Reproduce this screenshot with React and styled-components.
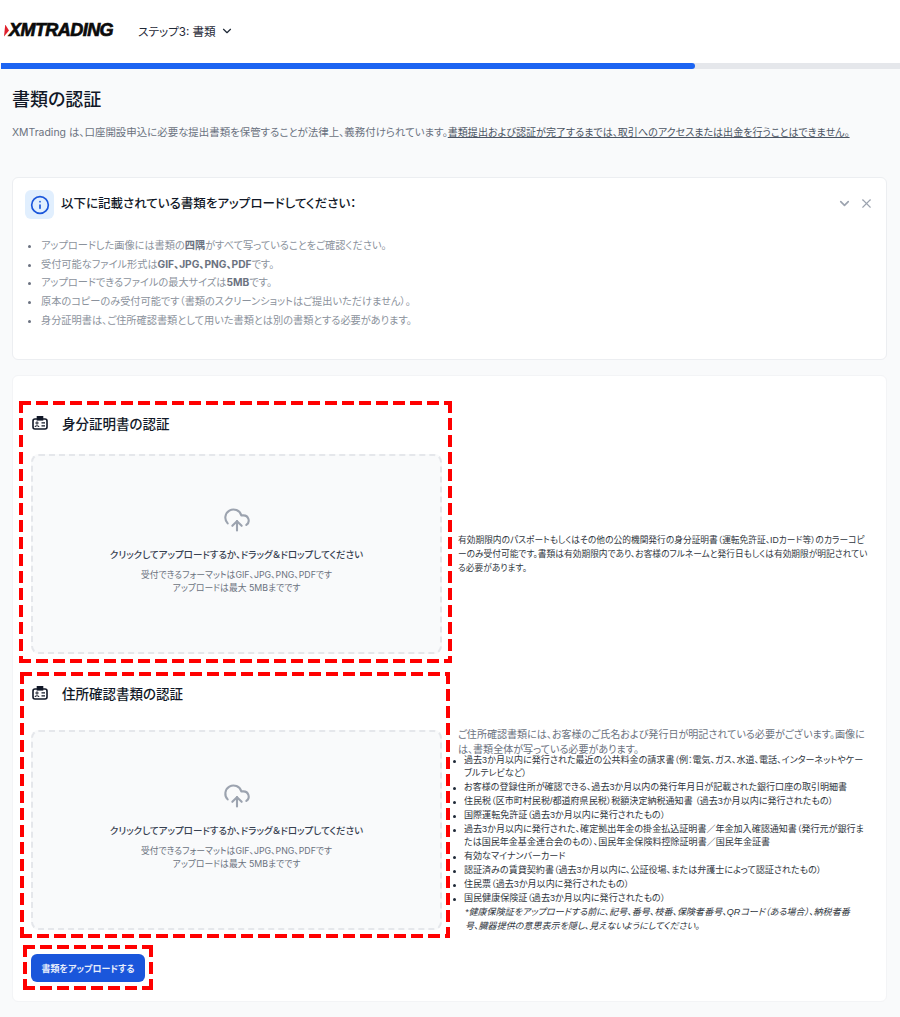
import React from 'react'
import styled, { createGlobalStyle } from 'styled-components'
import { ChevronDown, CloudUpload, Info, X } from 'lucide-react'

const Global = createGlobalStyle`
  html, body { margin: 0; padding: 0; }
  body {
    background: #f9fafb;
    color: #111827;
    font-family: Inter, "Noto Sans CJK JP", sans-serif;
    font-feature-settings: "palt";
  }
  * { box-sizing: border-box; }
`

const Page = styled.div`
  width: 900px;
  height: 1017px;
  overflow: hidden;
`

const Header = styled.header`
  height: 63px;
  background: #fff;
  display: flex;
  align-items: center;
  padding: 0 0 2px 4px;
`

const Logo = styled.div`
  width: 134px;
  display: flex;
  align-items: center;
`

const LogoMark = styled.span`
  width: 5px;
  height: 12px;
  background: #e0202c;
  clip-path: polygon(25% 0, 100% 50%, 0 100%);
`

const LogoText = styled.span`
  font-family: "Liberation Sans", sans-serif;
  font-size: 18px;
  font-weight: 700;
  font-style: italic;
  letter-spacing: -0.55px;
  color: #0b0b0b;
  -webkit-text-stroke: 0.7px #0b0b0b;
`

const Step = styled.div`
  display: flex;
  align-items: center;
  gap: 4px;
  font-size: 11.6px;
  color: #1f2937;
`

const Track = styled.div`
  height: 6px;
  margin-left: 1px;
  background: #e5e7eb;
`

const Fill = styled.div`
  height: 100%;
  background: #1c64f2;
  border-radius: 0 3px 3px 0;
`

const Main = styled.main`
  padding: 19px 13px 0 12px;
`

const Title = styled.h1`
  margin: 0;
  font-size: 18px;
  line-height: 24px;
  font-weight: 500;
  color: #111827;
`

const Lead = styled.p`
  margin: 11px 0 0;
  font-size: 10.45px;
  line-height: 18px;
  color: #6b7280;
  white-space: nowrap;
  a { color: #4b5563; font-size: 10.05px; text-decoration: underline; }
`

const Card = styled.section`
  background: #fff;
  border: 1px solid #eceef1;
  border-radius: 6px;
`

const InfoCard = styled(Card)`
  margin-top: 35px;
  height: 183px;
  padding: 12px 12px 0;
`

const InfoHead = styled.div`
  display: flex;
  align-items: center;
  gap: 7px;
`

const InfoBadge = styled.span`
  width: 29px;
  height: 29px;
  border-radius: 6px;
  background: #e1effe;
  color: #1a56db;
  display: flex;
  align-items: center;
  justify-content: center;
`

const InfoTitle = styled.h2`
  flex: 1;
  margin: -2px 0 0;
  font-size: 12.5px;
  line-height: 20px;
  font-weight: 500;
  color: #111827;
`

const InfoActions = styled.div`
  display: flex;
  gap: 7px;
  color: #9ca3af;
  margin: -3px 0 0 0;
`

const Notes = styled.ul`
  margin: 17px 0 0;
  padding: 0 0 0 16px;
  font-size: 10.2px;
  line-height: 18.7px;
  color: #8b929c;
  li::marker { color: #6b7280; }
  b { font-weight: 700; color: #6b7280; }
`

const UploadCard = styled(Card)`
  margin-top: 15px;
  height: 627px;
  padding: 27px 18px 0;
  border-color: #f3f4f6;
`

const Row = styled.div`
  position: relative;
  display: grid;
  grid-template-columns: 411px 1fr;
  column-gap: 16px;
  margin-bottom: ${p => p.$after}px;
`

const RowHead = styled.div`
  grid-column: 1 / 3;
  display: flex;
  align-items: center;
  gap: 14px;
  height: 42px;
  margin-left: 1px;
  margin-bottom: ${p => p.$gap}px;
`

const RowTitle = styled.h3`
  margin: 0;
  font-size: 13.5px;
  line-height: 20px;
  font-weight: 500;
  color: #111827;
`

const Drop = styled.div`
  height: 200px;
  background: #f9fafb;
  border: 2px dashed #e5e7eb;
  border-radius: 8px;
  display: flex;
  flex-direction: column;
  align-items: center;
  padding-top: 50px;
  color: #9ca3af;
`

const DropTitle = styled.p`
  margin: 13px 0 0;
  font-size: 9.5px;
  line-height: 16px;
  font-weight: 500;
  color: #374151;
`

const DropSub = styled.p`
  margin: 5px 0 0;
  font-size: 8.8px;
  line-height: 13px;
  text-align: center;
  color: #6b7280;
`

const Side = styled.div`
  align-self: center;
  font-family: "Liberation Sans", "Noto Sans CJK JP", sans-serif;
  font-size: 8.72px;
  line-height: 14px;
  color: #2f3640;
`

const SideLong = styled(Side)`
  margin: -4px 0;
  font-size: 9.05px;
`

const SideIntro = styled.p`
  margin: 0 0 -3px;
  font-size: 10.05px;
  line-height: 15px;
  color: #6b7280;
`

const SideList = styled.ul`
  margin: 0;
  padding: 0 4px 0 6px;
  list-style: none;
  li { position: relative; margin-bottom: 0; line-height: 13.8px; }
  li::before {
    content: "";
    position: absolute;
    left: -11px;
    top: 6px;
    width: 3px;
    height: 3px;
    border-radius: 50%;
    background: #1f2937;
  }
`

const SideNote = styled.p`
  margin: 0 8px 0 7px;
  font-size: 9.05px;
  line-height: 14px;
  font-style: italic;
`

const Submit = styled.button`
  display: block;
  height: 28px;
  width: 114px;
  margin: 0;
  padding: 0;
  border: 0;
  border-radius: 6px;
  background: #1a56db;
  color: #e8eefc;
  font-family: inherit;
  font-feature-settings: inherit;
  font-size: 9px;
  font-weight: 700;
`

// red review markup lying over the form
const Mark = styled.div`
  position: absolute;
  top: ${p => p.$top}px;
  left: ${p => p.$left}px;
  width: ${p => p.$w}px;
  height: ${p => p.$h}px;
  pointer-events: none;
  background:
    repeating-linear-gradient(90deg, #f00 0 12px, transparent 12px 17px) top / 100% 4px no-repeat,
    repeating-linear-gradient(90deg, #f00 0 12px, transparent 12px 17px) bottom / 100% 4px no-repeat,
    repeating-linear-gradient(180deg, #f00 0 12px, transparent 12px 17px) left / 4px 100% no-repeat,
    repeating-linear-gradient(180deg, #f00 0 12px, transparent 12px 17px) right / 4px 100% no-repeat;
`

const SubmitWrap = styled.div`
  position: relative;
`

const IdIcon = () => (
  <svg width="16" height="14" viewBox="0 0 16 14" fill="none" stroke="#111827" strokeWidth="1.6" style={{ marginTop: -2 }}>
    <rect x="1" y="3" width="14" height="10" rx="2" />
    <rect x="5.5" y="0.8" width="5" height="3" fill="#111827" />
    <circle cx="5" cy="7" r="1.1" strokeWidth="1" />
    <path d="M3 11c.3-1.6 3.7-1.6 4 0" strokeWidth="1.1" />
    <path d="M9.5 6.8h3.5M9.5 9.8h3.5" strokeWidth="1.2" />
  </svg>
)

const DropZone = () => (
  <Drop>
    <CloudUpload size={28} strokeWidth={1.8} />
    <DropTitle>クリックしてアップロードするか、ドラッグ＆ドロップしてください</DropTitle>
    <DropSub>
      受付できるフォーマットはGIF、JPG、PNG、PDFです
      <br />
      アップロードは最大 5MBまでです
    </DropSub>
  </Drop>
)

const notes = [
  <>アップロードした画像には書類の<b>四隅</b>がすべて写っていることをご確認ください。</>,
  <>受付可能なファイル形式は<b>GIF、JPG、PNG、PDF</b>です。</>,
  <>アップロードできるファイルの最大サイズは<b>5MB</b>です。</>,
  <>原本のコピーのみ受付可能です（書類のスクリーンショットはご提出いただけません）。</>,
  <>身分証明書は、ご住所確認書類として用いた書類とは別の書類とする必要があります。</>,
]

const addressDocs = [
  '過去3か月以内に発行された最近の公共料金の請求書（例：電気、ガス、水道、電話、インターネットやケーブルテレビなど）',
  'お客様の登録住所が確認できる、過去3か月以内の発行年月日が記載された銀行口座の取引明細書',
  '住民税（区市町村民税/都道府県民税）税額決定納税通知書 （過去3か月以内に発行されたもの）',
  '国際運転免許証（過去3か月以内に発行されたもの）',
  '過去3か月以内に発行された、確定拠出年金の掛金払込証明書／年金加入確認通知書（発行元が銀行または国民年金基金連合会のもの）、国民年金保険料控除証明書／国民年金証書',
  '有効なマイナンバーカード',
  '認証済みの賃貸契約書（過去3か月以内に、公証役場、または弁護士によって認証されたもの）',
  '住民票（過去3か月以内に発行されたもの）',
  '国民健康保険証（過去3か月以内に発行されたもの）',
]

export default function App() {
  return (
    <Page>
      <Global />
      <Header>
        <Logo>
          <LogoMark />
          <LogoText>XMTRADING</LogoText>
        </Logo>
        <Step>
          ステップ3: 書類
          <ChevronDown size={14} strokeWidth={2} />
        </Step>
      </Header>
      <Track>
        <Fill style={{ width: '77.2%' }} />
      </Track>
      <Main>
        <Title>書類の認証</Title>
        <Lead>
          XMTrading は、口座開設申込に必要な提出書類を保管することが法律上、義務付けられています。
          <a href="#docs">書類提出および認証が完了するまでは、取引へのアクセスまたは出金を行うことはできません。</a>
        </Lead>
        <InfoCard>
          <InfoHead>
            <InfoBadge>
              <Info size={20} strokeWidth={2} />
            </InfoBadge>
            <InfoTitle>以下に記載されている書類をアップロードしてください：</InfoTitle>
            <InfoActions>
              <ChevronDown size={15} strokeWidth={2.6} />
              <X size={15} strokeWidth={1.8} />
            </InfoActions>
          </InfoHead>
          <Notes>
            {notes.map((n, i) => (
              <li key={i}>{n}</li>
            ))}
          </Notes>
        </InfoCard>
        <UploadCard>
          <Row $after={19}>
            <RowHead $gap={9}>
              <IdIcon />
              <RowTitle>身分証明書の認証</RowTitle>
            </RowHead>
            <DropZone />
            <Side>
              有効期限内のパスポートもしくはその他の公的機関発行の身分証明書（運転免許証、IDカード等）のカラーコピーのみ受付可能です。書類は有効期限内であり、お客様のフルネームと発行日もしくは有効期限が明記されている必要があります。
            </Side>
            <Mark $top={-2} $left={-12} $w={433} $h={262} />
          </Row>
          <Row $after={24}>
            <RowHead $gap={15}>
              <IdIcon />
              <RowTitle>住所確認書類の認証</RowTitle>
            </RowHead>
            <DropZone />
            <SideLong>
              <SideIntro>ご住所確認書類には、お客様のご氏名および発行日が明記されている必要がございます。画像には、書類全体が写っている必要があります。</SideIntro>
              <SideList>
                {addressDocs.map(d => (
                  <li key={d}>{d}</li>
                ))}
              </SideList>
              <SideNote>*健康保険証をアップロードする前に、記号、番号、枝番、保険者番号、QRコード（ある場合）、納税者番号、臓器提供の意思表示を隠し、見えないようにしてください。</SideNote>
            </SideLong>
            <Mark $top={-1} $left={-11} $w={430} $h={266} />
          </Row>
          <SubmitWrap>
            <Submit>書類をアップロードする</Submit>
            <Mark $top={-9} $left={-8} $w={130} $h={45} />
          </SubmitWrap>
        </UploadCard>
      </Main>
    </Page>
  )
}
